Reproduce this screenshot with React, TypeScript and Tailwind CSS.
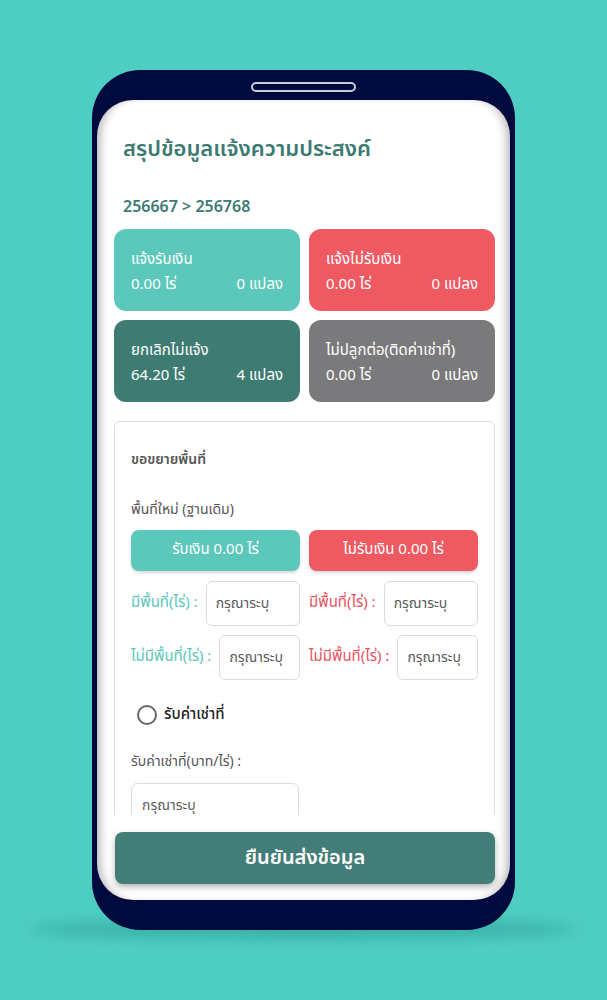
import React from "react";

const font = { fontFamily: '"Noto Sans Thai", "Noto Sans", "Noto Sans CJK SC", sans-serif' };

interface SummaryCard {
  title: string;
  rai: string;
  plots: string;
  color: string;
}

const cards: SummaryCard[] = [
  { title: "แจ้งรับเงิน", rai: "0.00 ไร่", plots: "0 แปลง", color: "bg-[#5cc8bb]" },
  { title: "แจ้งไม่รับเงิน", rai: "0.00 ไร่", plots: "0 แปลง", color: "bg-[#ee5962]" },
  { title: "ยกเลิกไม่แจ้ง", rai: "64.20 ไร่", plots: "4 แปลง", color: "bg-[#3e7b73]" },
  { title: "ไม่ปลูกต่อ(ติดค่าเช่าที่)", rai: "0.00 ไร่", plots: "0 แปลง", color: "bg-[#7a797b]" },
];

function Field({ label, labelClass }: { label: string; labelClass: string }) {
  return (
    <div className="flex items-center gap-[8px]">
      <span className={`text-[15px] whitespace-nowrap ${labelClass}`}>{label}</span>
      <input
        placeholder="กรุณาระบุ"
        className="h-[45px] min-w-0 flex-1 rounded-[6px] border border-[#dcdcdc] px-[9px] text-[14px] text-[#444] placeholder:text-[#5a5a5a] outline-none"
        style={font}
      />
    </div>
  );
}

export default function App() {
  return (
    <div className="relative flex h-[1000px] w-[607px] justify-center overflow-hidden bg-[#4ecdc2] pt-[70px]" style={font}>
      <div className="absolute left-[30px] top-[920px] h-[18px] w-[547px] rounded-[50%] bg-[#2a9990] opacity-60 blur-[7px]"></div>

      <div className="relative flex h-[860px] w-[423px] flex-col rounded-[48px] bg-[#000a3e] px-[5px] pb-[30px] pt-[12px]">
        <div className="mx-auto h-[10px] w-[105px] rounded-full border-2 border-[#c9ccd9]"></div>

        <div className="mt-[8px] flex flex-1 flex-col overflow-hidden rounded-[36px] bg-white shadow-[inset_9px_0_10px_-6px_rgba(0,0,0,0.3),inset_-9px_0_10px_-6px_rgba(0,0,0,0.3)]">
          <div className="flex-1 overflow-hidden pl-[17px] pr-[15px] pt-[34px]">
            <h1 className="pl-[9px] text-[22px] font-semibold leading-[32px] text-[#3c7b73]">
              สรุปข้อมูลแจ้งความประสงค์
            </h1>
            <p className="mt-[30px] pl-[9px] text-[16px] font-semibold leading-[22px] text-[#3c7b73]">
              256667 &gt; 256768
            </p>

            <div className="mt-[11px] grid grid-cols-2 gap-[9px]">
              {cards.map((c) => (
                <div key={c.title} className={`h-[82px] rounded-[12px] px-[17px] pt-[20px] text-white ${c.color}`}>
                  <div className="text-[15px] leading-[22px]">{c.title}</div>
                  <div className="mt-[3px] flex justify-between text-[15px] leading-[22px]">
                    <span>{c.rai}</span>
                    <span>{c.plots}</span>
                  </div>
                </div>
              ))}
            </div>

            <div className="mt-[19px] rounded-[6px] border border-[#dedede] pl-[16px] pr-[16px] pt-[27px] pb-[20px]">
              <div className="text-[14px] font-semibold leading-[22px] text-[#555]">ขอขยายพื้นที่</div>
              <div className="mt-[28px] text-[14px] leading-[22px] text-[#555]">พื้นที่ใหม่ (ฐานเดิม)</div>

              <div className="mt-[9px] grid grid-cols-2 gap-[9px]">
                <button className="h-[41px] rounded-[8px] bg-[#5cc8bb] text-[15px] text-white shadow-[0_2px_3px_rgba(0,0,0,0.15)]" style={font}>
                  รับเงิน 0.00 ไร่
                </button>
                <button className="h-[41px] rounded-[8px] bg-[#ee5962] text-[15px] text-white shadow-[0_2px_3px_rgba(0,0,0,0.15)]" style={font}>
                  ไม่รับเงิน 0.00 ไร่
                </button>
              </div>

              <div className="mt-[10px] grid grid-cols-2 gap-x-[9px] gap-y-[9px]">
                <Field label="มีพื้นที่(ไร่) :" labelClass="text-[#5cc8bb]" />
                <Field label="มีพื้นที่(ไร่) :" labelClass="text-[#e8545e]" />
                <Field label="ไม่มีพื้นที่(ไร่) :" labelClass="text-[#5cc8bb]" />
                <Field label="ไม่มีพื้นที่(ไร่) :" labelClass="text-[#e8545e]" />
              </div>

              <label className="mt-[24px] flex items-center gap-[7px] pl-[6px]">
                <span className="h-[20px] w-[20px] rounded-full border-2 border-[#666]"></span>
                <span className="text-[15px] font-medium leading-[22px] text-[#222]">รับค่าเช่าที่</span>
              </label>

              <div className="mt-[25px] text-[14px] leading-[22px] text-[#555]">รับค่าเช่าที่(บาท/ไร่) :</div>
              <input
                placeholder="กรุณาระบุ"
                className="mt-[10px] h-[45px] w-[168px] rounded-[6px] border border-[#dcdcdc] px-[10px] text-[14px] placeholder:text-[#5a5a5a] outline-none"
                style={font}
              />
            </div>
          </div>

          <div className="pl-[18px] pr-[15px] pb-[16px] pt-[17px]">
            <button
              className="h-[52px] w-full rounded-[8px] bg-[#427d77] text-[20px] font-semibold text-white shadow-[0_3px_6px_rgba(0,0,0,0.3)]"
              style={font}
            >
              ยืนยันส่งข้อมูล
            </button>
          </div>
        </div>
      </div>
    </div>
  );
}
